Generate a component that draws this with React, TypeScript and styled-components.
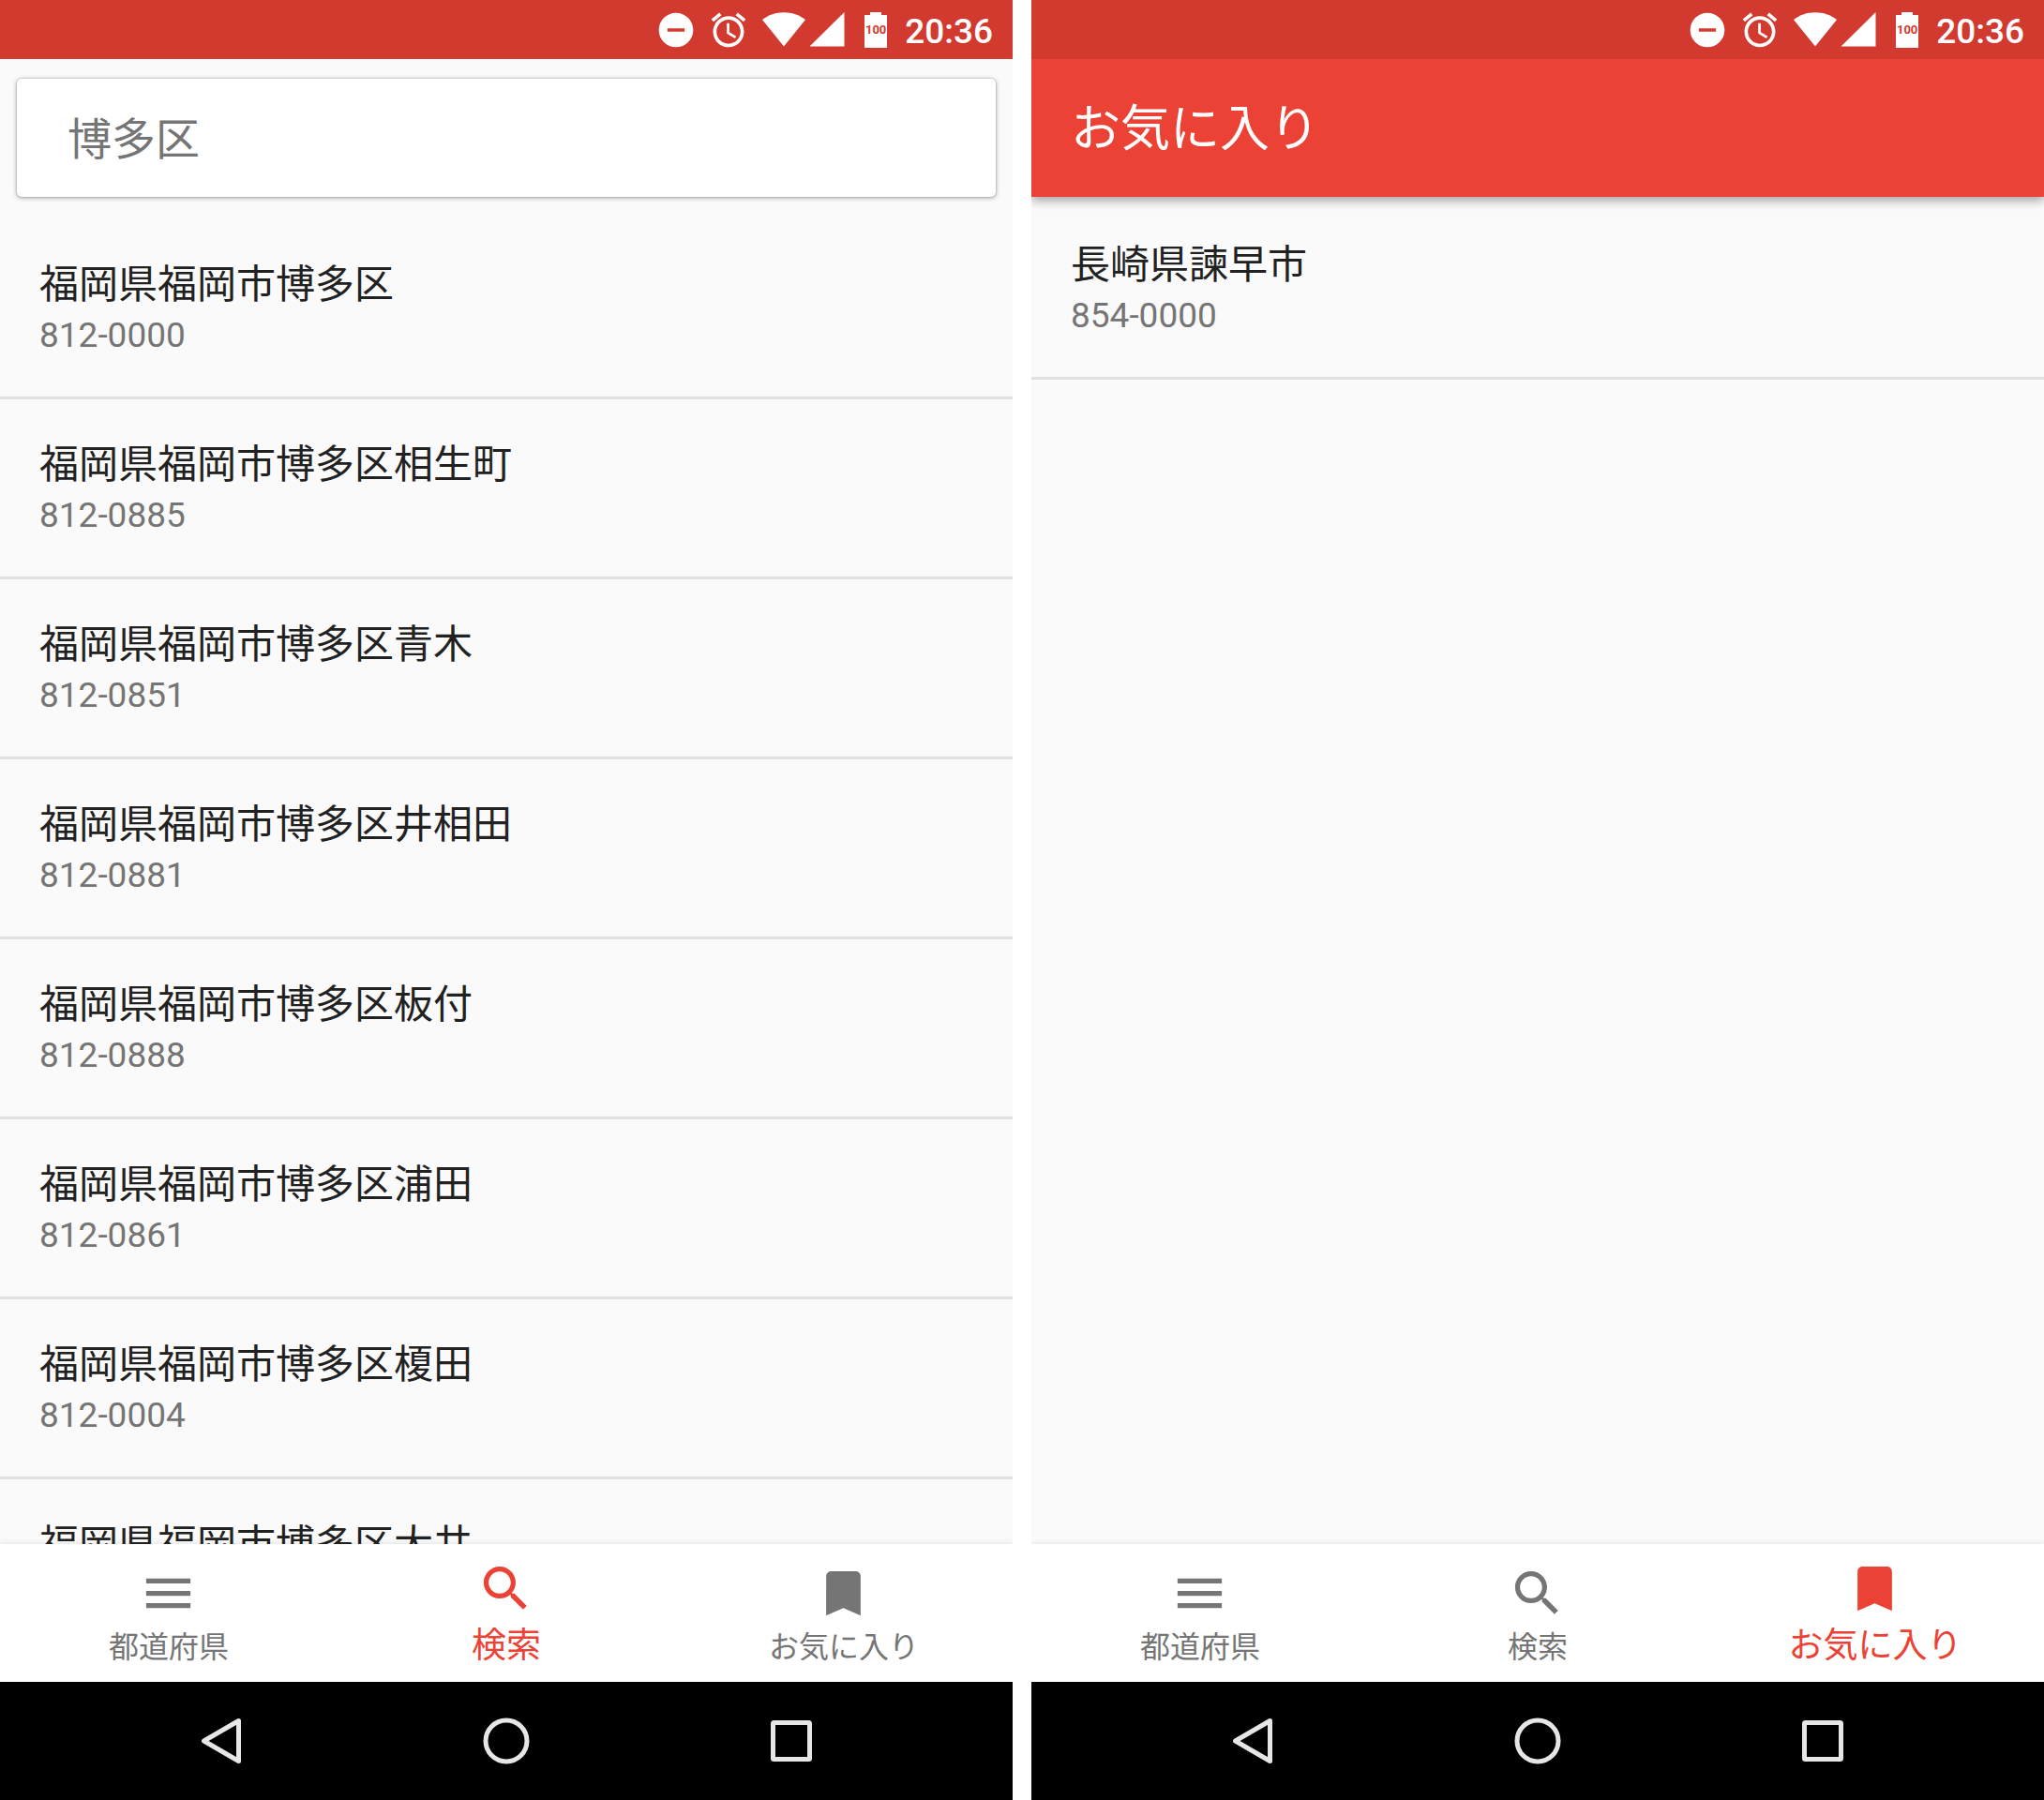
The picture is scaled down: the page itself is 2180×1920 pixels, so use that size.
import React from "react";
import styled, { createGlobalStyle, css } from "styled-components";

const color = {
  status: "#d23a2f",
  primary: "#ec4235",
  surface: "#ffffff",
  page: "#fafafa",
  text: "#212121",
  muted: "#757575",
  divider: "#e0e0e0",
  system: "#e6e6e6",
};

const GlobalStyle = createGlobalStyle`
  *, *::before, *::after { box-sizing: border-box; }
  body {
    margin: 0;
    background: #ffffff;
    font-family: Roboto, "Noto Sans CJK JP", sans-serif;
  }
  button, input { font: inherit; border: 0; margin: 0; padding: 0; background: none; }
`;

const Screens = styled.main`
  display: flex;
  gap: 20px;
  height: 100vh;
`;

const Screen = styled.section`
  flex: 1 1 0;
  min-width: 0;
  display: flex;
  flex-direction: column;
  background: ${color.page};
  overflow: hidden;
`;

const StatusBar = styled.div`
  flex: none;
  position: relative;
  z-index: 1;
  display: flex;
  align-items: center;
  justify-content: flex-end;
  height: 63px;
  padding-right: 21px;
  background: ${color.status};
  color: #ffffff;
`;

const StatusIcons = styled.div`
  display: flex;
  align-items: center;
  gap: 12px;
`;

const Network = styled.div`
  display: flex;
  gap: 4px;
  padding-left: 2px;
`;

const Battery = styled.div`
  position: relative;
  display: flex;
  margin: 0 19px 0 21px;
`;

const BatteryLevel = styled.span`
  position: absolute;
  inset: 0;
  display: flex;
  align-items: center;
  justify-content: center;
  font-size: 13px;
  font-weight: 700;
  line-height: 38px;
  color: ${color.status};
`;

const Clock = styled.time`
  font-size: 37px;
  font-weight: 500;
  line-height: 63px;
  padding-top: 3px;
`;

const SearchCard = styled.form`
  flex: none;
  display: flex;
  margin: 21px 18px 24px;
  height: 126px;
  border-radius: 5px;
  background: ${color.surface};
  box-shadow: 0 1px 5px rgba(0, 0, 0, 0.35), 0 0 2px rgba(0, 0, 0, 0.28);
`;

const SearchInput = styled.input`
  flex: 1;
  min-width: 0;
  padding: 0 54px 5px;
  font-size: 47px;
  color: ${color.muted};
  border-radius: 5px;
  outline: none;
`;

const AppBar = styled.header`
  flex: none;
  position: relative;
  display: flex;
  align-items: center;
  height: 147px;
  padding: 3px 42px 0;
  margin-bottom: 3px;
  background: ${color.primary};
  color: #ffffff;
  box-shadow: 0 4px 10px rgba(0, 0, 0, 0.35);
`;

const AppTitle = styled.h1`
  margin: 0;
  font-size: 53px;
  font-weight: 400;
  line-height: 80px;
`;

const Results = styled.ul`
  flex: 1;
  min-height: 0;
  margin: 0;
  padding: 0;
  list-style: none;
  overflow: hidden;
`;

const Result = styled.li`
  padding: 42px 42px 39px;
  border-bottom: 3px solid ${color.divider};
`;

const Place = styled.div`
  font-size: 42px;
  line-height: 56px;
  color: ${color.text};
`;

const PostalCode = styled.div`
  font-size: 37px;
  line-height: 52px;
  color: ${color.muted};
`;

const TabBar = styled.nav`
  flex: none;
  position: relative;
  display: grid;
  grid-template-columns: repeat(3, 1fr);
  height: 147px;
  background: ${color.surface};
  box-shadow: 0 0 6px rgba(0, 0, 0, 0.12);
`;

const Tab = styled.button<{ $active: boolean }>`
  display: flex;
  flex-direction: column;
  align-items: center;
  justify-content: flex-start;
  cursor: pointer;
  ${({ $active }) =>
    $active
      ? css`
          padding-top: 16px;
          font-size: 37px;
          line-height: 60px;
          color: ${color.primary};
        `
      : css`
          padding-top: 21px;
          font-size: 32px;
          line-height: 52px;
          color: ${color.muted};
        `}
`;

const TabIcon = styled.svg`
  flex: none;
  width: 63px;
  height: 63px;
  margin-right: 1px;
  fill: currentColor;
`;

const SystemBar = styled.div`
  flex: none;
  display: flex;
  justify-content: center;
  height: 126px;
  background: #000000;
`;

const SystemButton = styled.button`
  flex: 0 1 304px;
  display: flex;
  align-items: center;
  justify-content: center;
  cursor: pointer;
`;

const SystemIcon = styled.svg`
  width: 52px;
  height: 52px;
  fill: none;
  stroke: ${color.system};
  stroke-width: 5;
  stroke-linejoin: round;
`;

const StatusHeader = () => (
  <StatusBar>
    <StatusIcons>
      <svg width="44" height="44" viewBox="0 0 24 24" fill="#fff" aria-hidden="true">
        <path d="M12 2C6.48 2 2 6.48 2 12s4.48 10 10 10 10-4.48 10-10S17.52 2 12 2zm5 11H7v-2h10v2z" />
      </svg>
      <svg width="44" height="44" viewBox="0 0 24 24" fill="#fff" aria-hidden="true">
        <path d="M22 5.72l-4.6-3.86-1.29 1.53 4.6 3.86L22 5.72zM7.88 3.39L6.6 1.86 2 5.71l1.29 1.53 4.59-3.85zM12.5 8H11v6l4.75 2.85.75-1.23-4-2.37V8zM12 4c-4.97 0-9 4.03-9 9s4.02 9 9 9c4.97 0 9-4.03 9-9s-4.03-9-9-9zm0 16c-3.87 0-7-3.13-7-7s3.13-7 7-7 7 3.13 7 7-3.13 7-7 7z" />
      </svg>
      <Network>
        <svg width="46" height="37" viewBox="0 0 46 37" fill="#fff" aria-hidden="true">
          <path d="M0 8C6.500 3 14.500 0.300 23 0.300S39.500 3 46 8L23 36.500z" />
        </svg>
        <svg width="38" height="37" viewBox="0 0 38 37" fill="#fff" aria-hidden="true">
          <path d="M0.500 36.500H37.500V0z" />
        </svg>
      </Network>
    </StatusIcons>
    <Battery>
      <svg width="24" height="38" viewBox="0 0 24 38" fill="#fff" aria-hidden="true">
        <path d="M6 0h12v3h6v35H0V3h6z" />
      </svg>
      <BatteryLevel>100</BatteryLevel>
    </Battery>
    <Clock>20:36</Clock>
  </StatusBar>
);

const tabs = [
  { label: "都道府県", path: "M3 18h18v-2H3v2zm0-5h18v-2H3v2zm0-7v2h18V6H3z" },
  {
    label: "検索",
    path: "M15.5 14h-.79l-.28-.27C15.41 12.59 16 11.11 16 9.500 16 5.910 13.090 3 9.500 3S3 5.910 3 9.500 5.910 16 9.500 16c1.610 0 3.090-.59 4.230-1.570l.27.28v.79l5 4.990L20.490 19l-4.990-5zm-6 0C7.010 14 5 11.990 5 9.500S7.010 5 9.500 5 14 7.010 14 9.500 11.990 14 9.500 14z",
  },
  { label: "お気に入り", path: "M17 3H7c-1.100 0-1.990.9-1.990 2L5 21l7-3 7 3V5c0-1.100-.9-2-2-2z" },
];

const Tabs = ({ active }: { active: string }) => (
  <TabBar>
    {tabs.map(({ label, path }) => (
      <Tab
        key={label}
        type="button"
        $active={label === active}
        aria-current={label === active ? "page" : undefined}
      >
        <TabIcon viewBox="0 0 24 24" aria-hidden="true">
          <path d={path} />
        </TabIcon>
        {label}
      </Tab>
    ))}
  </TabBar>
);

const SystemNav = () => (
  <SystemBar>
    <SystemButton type="button" aria-label="戻る">
      <SystemIcon viewBox="0 0 52 52" aria-hidden="true">
        <path d="M44.500 4.500V47.500L7.500 26z" />
      </SystemIcon>
    </SystemButton>
    <SystemButton type="button" aria-label="ホーム">
      <SystemIcon viewBox="0 0 52 52" aria-hidden="true">
        <circle cx="26" cy="26" r="22" />
      </SystemIcon>
    </SystemButton>
    <SystemButton type="button" aria-label="履歴">
      <SystemIcon viewBox="0 0 52 52" aria-hidden="true">
        <rect x="6.500" y="6.500" width="39" height="39" rx="1" />
      </SystemIcon>
    </SystemButton>
  </SystemBar>
);

type Address = { place: string; code?: string };

const ResultList = ({ items }: { items: Address[] }) => (
  <Results>
    {items.map(({ place, code }) => (
      <Result key={place}>
        <Place>{place}</Place>
        {code && <PostalCode>{code}</PostalCode>}
      </Result>
    ))}
  </Results>
);

const found: Address[] = [
  { place: "福岡県福岡市博多区", code: "812-0000" },
  { place: "福岡県福岡市博多区相生町", code: "812-0885" },
  { place: "福岡県福岡市博多区青木", code: "812-0851" },
  { place: "福岡県福岡市博多区井相田", code: "812-0881" },
  { place: "福岡県福岡市博多区板付", code: "812-0888" },
  { place: "福岡県福岡市博多区浦田", code: "812-0861" },
  { place: "福岡県福岡市博多区榎田", code: "812-0004" },
  { place: "福岡県福岡市博多区大井" },
];

const favorites: Address[] = [{ place: "長崎県諫早市", code: "854-0000" }];

export default function App() {
  return (
    <>
      <GlobalStyle />
      <Screens lang="ja">
        <Screen>
          <StatusHeader />
          <SearchCard role="search" onSubmit={(event) => event.preventDefault()}>
            <SearchInput type="text" aria-label="検索" defaultValue="博多区" />
          </SearchCard>
          <ResultList items={found} />
          <Tabs active="検索" />
          <SystemNav />
        </Screen>
        <Screen>
          <StatusHeader />
          <AppBar>
            <AppTitle>お気に入り</AppTitle>
          </AppBar>
          <ResultList items={favorites} />
          <Tabs active="お気に入り" />
          <SystemNav />
        </Screen>
      </Screens>
    </>
  );
}
